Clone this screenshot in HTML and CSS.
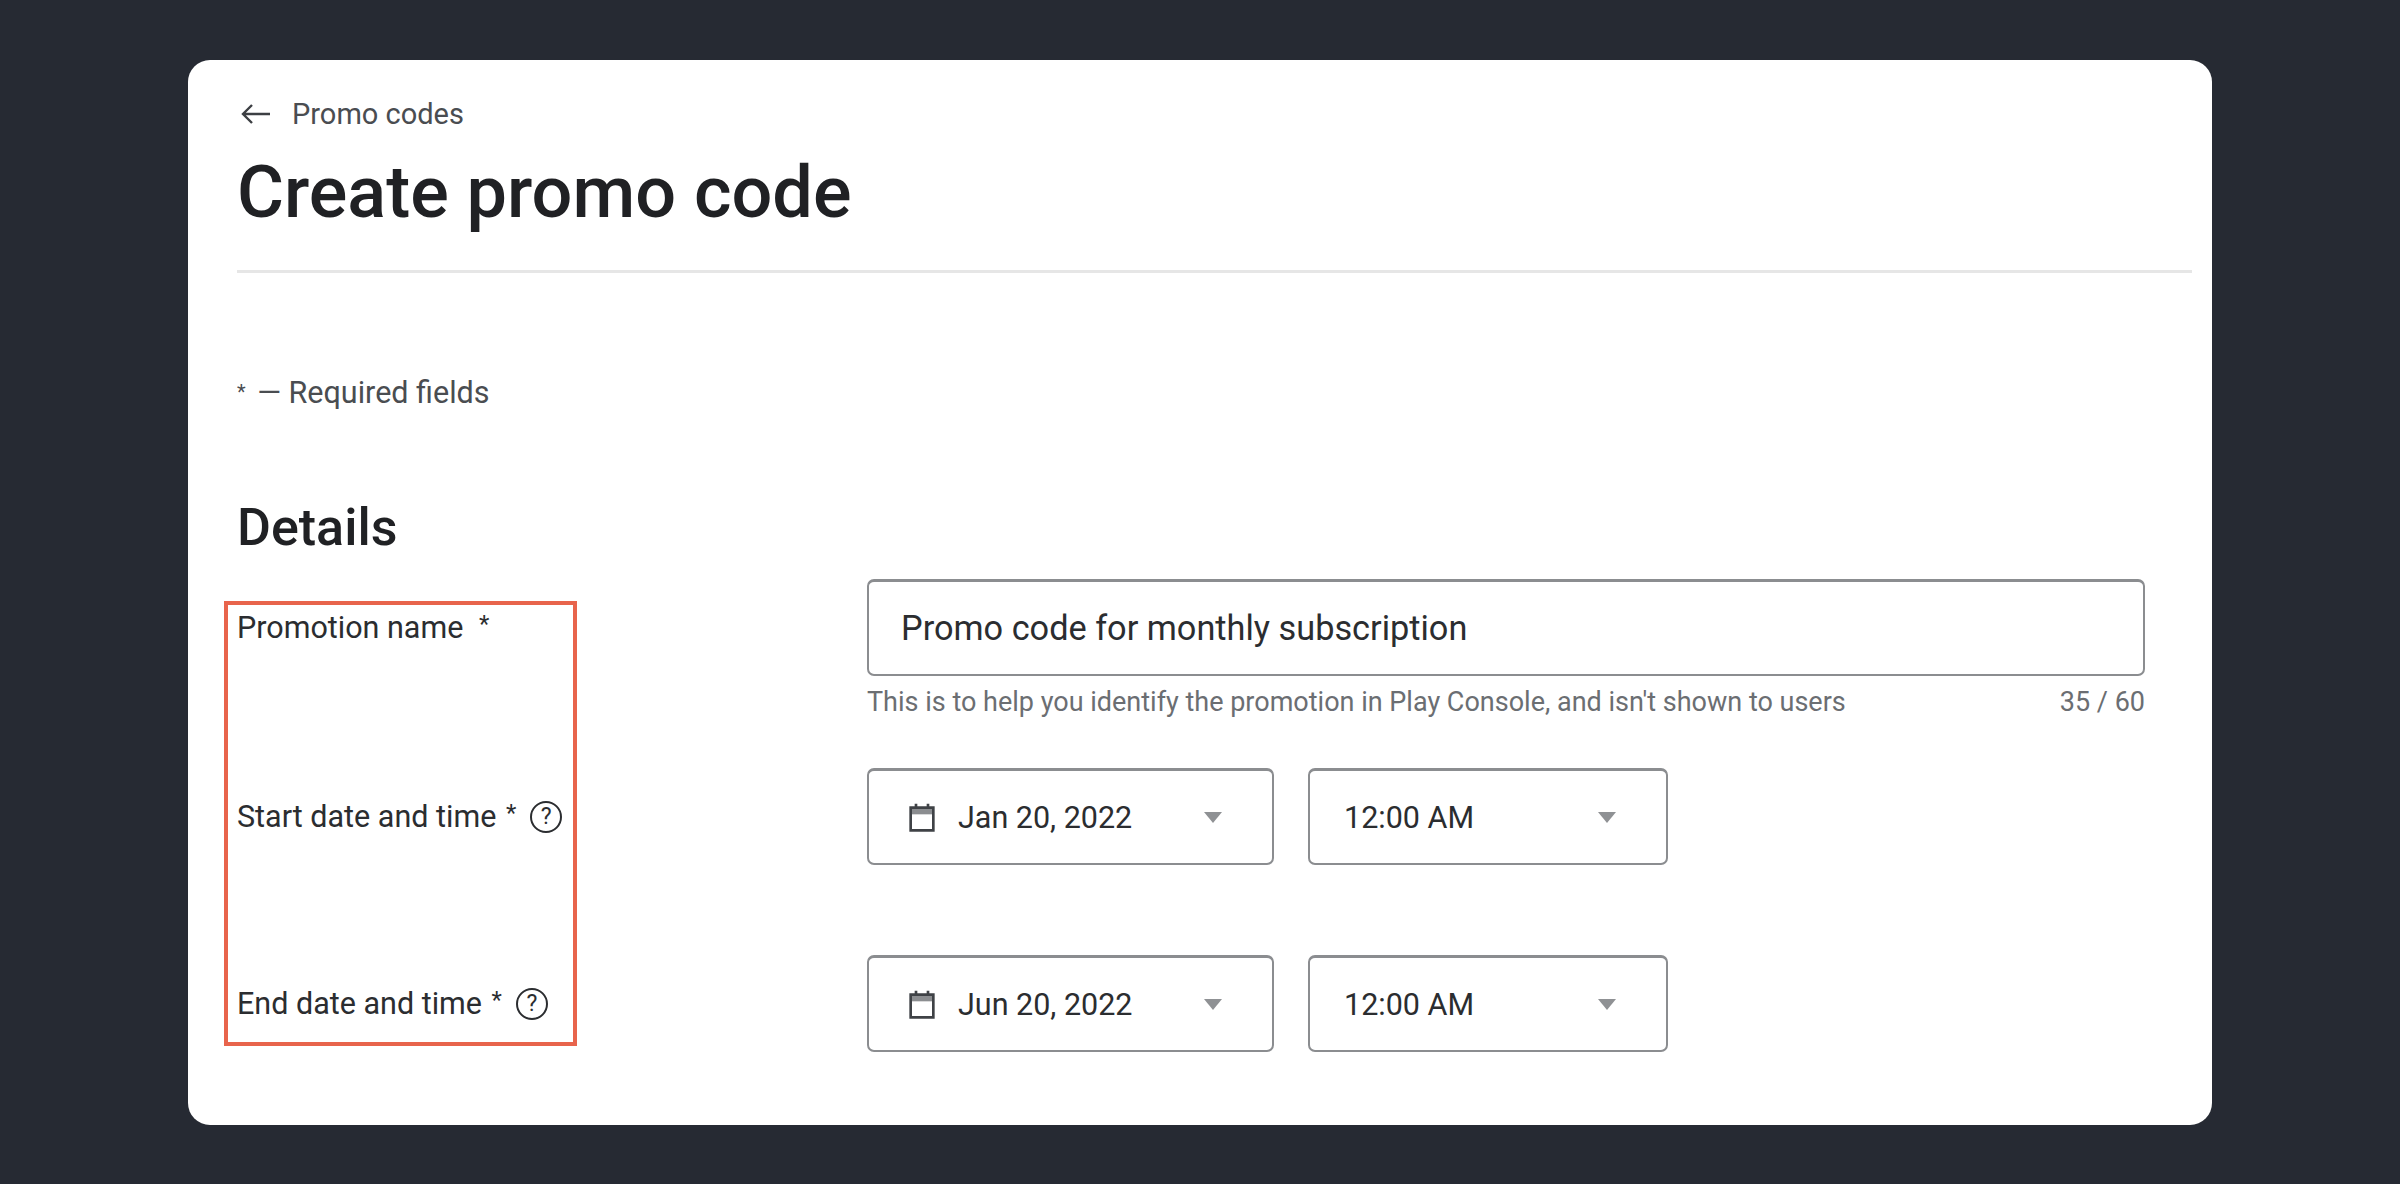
FILE: index.html
```html
<!DOCTYPE html>
<html lang="en">
<head>
    <meta charset="UTF-8">
    <meta name="viewport" content="width=device-width, initial-scale=1.0">
    <title>Create promo code</title>
    <link rel="stylesheet" href="styles.css">
</head>
<body>

<div class="card">
    <header class="page-head">
        <a class="back-link">
            <svg class="back-arrow" viewBox="0 0 32 24"><path d="M30 12H3M12 3l-9 9 9 9" fill="none" stroke="#3c3f43" stroke-width="2.4"/></svg>
            <span>Promo codes</span>
        </a>
        <h1>Create promo code</h1>
    </header>

    <p class="required-note"><span class="note-star">*</span> — Required fields</p>
    <h2>Details</h2>

    <div class="form">
        <div class="highlight"></div>

        <div class="form-row row-name">
            <div class="label">Promotion name <span class="star star-gap">*</span></div>
            <div class="field-col">
                <div class="box box-wide">Promo code for monthly subscription</div>
                <div class="hint"><span>This is to help you identify the promotion in Play Console, and isn't shown to users</span><span>35 / 60</span></div>
            </div>
        </div>

        <div class="form-row row-date">
            <div class="label">Start date and time <span class="star">*</span><span class="help">?</span></div>
            <div class="pickers">
                <div class="box box-date">
                    <svg class="cal" viewBox="0 0 24 24"><path class="cal-band" d="M3.500 5h17v5h-17z"/><path d="M3.500 5h17v17h-17zM7.500 2v4M16.500 2v4" fill="none" stroke="#3f4246" stroke-width="2"/></svg>
                    <span class="box-text">Jan 20, 2022</span>
                    <span class="caret"></span>
                </div>
                <div class="box box-time">
                    <span class="box-text">12:00 AM</span>
                    <span class="caret"></span>
                </div>
            </div>
        </div>

        <div class="form-row row-date">
            <div class="label">End date and time <span class="star">*</span><span class="help">?</span></div>
            <div class="pickers">
                <div class="box box-date">
                    <svg class="cal" viewBox="0 0 24 24"><path class="cal-band" d="M3.500 5h17v5h-17z"/><path d="M3.500 5h17v17h-17zM7.500 2v4M16.500 2v4" fill="none" stroke="#3f4246" stroke-width="2"/></svg>
                    <span class="box-text">Jun 20, 2022</span>
                    <span class="caret"></span>
                </div>
                <div class="box box-time">
                    <span class="box-text">12:00 AM</span>
                    <span class="caret"></span>
                </div>
            </div>
        </div>
    </div>
</div>

</body>
</html>
```

FILE: styles.css
```css
* {box-sizing: border-box; margin: 0; padding: 0;}
body {background-color: #262a33; color: #202124; font-family: Roboto, "Liberation Sans", sans-serif; height: 1184px; overflow: hidden; padding: 60px 188px 0;}

.card {background-color: #fff; border-radius: 22px; height: 1065px; padding: 0 20px 0 49px;}

.page-head {border-bottom: 3px solid #e6e6e6; height: 213px; padding-top: 36px;}
.back-link {display: flex; align-items: center; gap: 20px; height: 36px; color: #4a4d51; font-size: 29px;}
.back-arrow {width: 32px; height: 24px; margin-left: 3px;}
h1 {font-size: 72px; font-weight: 500; line-height: 84px; margin-top: 19px; color: #202124;}

.required-note {margin-top: 101px; font-size: 30.500px; line-height: 36px; color: #4a4d51;}
.note-star {font-size: 20px; vertical-align: 4px; margin-right: 4px;}
h2 {margin-top: 89px; font-size: 52px; font-weight: 500; line-height: 56px; color: #202124;}

.form {position: relative; margin-top: 23px; padding-right: 47px;}
.highlight {position: absolute; left: -13px; top: 22px; width: 353px; height: 445px; border: 4px solid #e8644c;}

.form-row {display: grid; grid-template-columns: 630px 1fr;}
.row-name {height: 189px;}
.row-date {height: 187px;}
.label {display: flex; align-items: center; height: 97px; font-size: 30.500px; color: #2b2d30; white-space: pre-wrap;}
.star {font-size: 24px; margin-top: -8px; margin-left: 2px;}
.star-gap {margin-left: 8px;}
.help {display: inline-flex; align-items: center; justify-content: center; width: 32px; height: 32px; margin-left: 14px; border: 2px solid #2b2d30; border-radius: 50%; font-size: 23px;}

.box {display: flex; align-items: center; height: 97px; border: 2px solid #8b8d90; border-top-width: 3px; border-radius: 7px; font-size: 30.500px; color: #2b2d30;}
.box-wide {padding-left: 32px; font-size: 34.300px;}
.hint {display: flex; justify-content: space-between; margin-top: 11px; font-size: 27px; line-height: 30px; color: #6b6e72;}

.pickers {display: flex; gap: 34px;}
.box-date {width: 407px; padding: 0 50px 0 37px;}
.box-time {width: 360px; padding: 0 50px 0 34px;}
.cal {width: 32px; height: 32px; margin-right: 20px;}
.cal-band {fill: #8b8d90;}
.box-text {flex: 1;}
.caret {width: 0; height: 0; border-left: 9px solid transparent; border-right: 9px solid transparent; border-top: 11px solid #8f9194;}
```
